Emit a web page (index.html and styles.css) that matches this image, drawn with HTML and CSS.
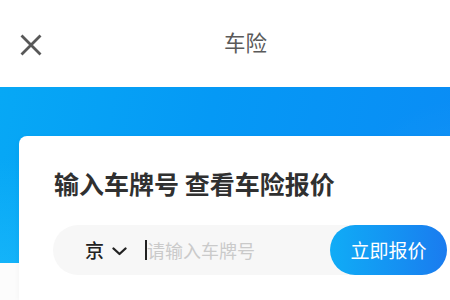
FILE: index.html
```html
<!DOCTYPE html>
<html lang="zh-CN">
<head>
<meta charset="utf-8">
<title>车险</title>
<link rel="stylesheet" href="styles.css">
</head>
<body>
<header class="topbar">
  <svg class="close" width="22" height="22" viewBox="0 0 22 22" aria-hidden="true">
    <path d="M1.5 1.5 L20.5 20.5 M20.5 1.5 L1.5 20.5" stroke="#585858" stroke-width="2.8" stroke-linecap="butt" fill="none"/>
  </svg>
  <h1 class="topbar-title">车险</h1>
</header>
<section class="hero">
  <div class="card">
    <h2 class="card-title">输入车牌号 查看车险报价</h2>
    <div class="search">
      <span class="province">京</span>
      <svg class="chev" width="15" height="9" viewBox="0 0 15 9" aria-hidden="true">
        <path d="M1.5 1.5 L7.5 7 L13.5 1.5" stroke="#222" stroke-width="2.3" fill="none" stroke-linecap="round" stroke-linejoin="round"/>
      </svg>
      <span class="caret"></span>
      <span class="placeholder">请输入车牌号</span>
      <button class="quote">立即报价</button>
    </div>
  </div>
</section>
</body>
</html>
```

FILE: styles.css
```css
html, body {
  margin: 0;
  padding: 0;
}
body {
  width: 450px;
  height: 300px;
  overflow: hidden;
  background: #fcfcfc;
  font-family: "Noto Sans CJK SC", "Noto Sans", sans-serif;
}
.topbar {
  height: 87px;
  background: #fff;
  display: flex;
  align-items: center;
  box-sizing: border-box;
  padding-left: 20px;
}
.close {
  display: block;
  flex: none;
  margin-top: 2px;
}
.topbar-title {
  margin: -3px 0 0 182px;
  font-size: 21.5px;
  font-weight: 400;
  color: #5a5a5a;
  line-height: 30px;
}
.hero {
  padding-top: 49px;
  background:
    radial-gradient(ellipse 160px 120px at 0px 190px, rgba(40, 200, 255, 0.45), rgba(40, 200, 255, 0) 100%),
    radial-gradient(ellipse 130px 110px at 470px 120px, rgba(255, 255, 255, 0.06), rgba(255, 255, 255, 0) 100%),
    linear-gradient(100deg, #07a8f5 0%, #0599f5 45%, #0a8cf5 100%);
  background-size: 100% 176px;
  background-repeat: no-repeat;
  height: 164px;
}
.card {
  margin-left: 19px;
  height: 164px;
  background: #fff;
  border-radius: 8px 0 0 0;
  box-sizing: border-box;
  padding: 30px 0 0 34px;
  box-shadow: 0 2px 6px rgba(0, 0, 0, 0.04);
}
.card-title {
  margin: 0 0 0 1px;
  font-size: 25px;
  line-height: 34px;
  font-weight: 700;
  color: #303030;
}
.search {
  margin-top: 25px;
  width: 394px;
  height: 50px;
  border-radius: 25px;
  background: #f7f7f7;
  display: flex;
  align-items: center;
  box-sizing: border-box;
  padding-left: 32px;
}
.province {
  font-size: 19px;
  font-weight: 500;
  color: #222;
  line-height: 24px;
}
.chev {
  display: block;
  margin-left: 8px;
  margin-top: 2px;
}
.caret {
  width: 2px;
  height: 20px;
  background: #222;
  margin-left: 18px;
}
.placeholder {
  font-size: 18px;
  color: #cacaca;
  line-height: 24px;
}
.quote {
  margin-left: auto;
  width: 117px;
  height: 50px;
  border: none;
  border-radius: 25px;
  background: linear-gradient(90deg, #10acf6 0%, #1590f2 60%, #1a7bef 100%);
  color: #fff;
  font-family: "Noto Sans CJK SC", "Noto Sans", sans-serif;
  font-size: 19px;
  padding: 0 0 2px;
}
```
